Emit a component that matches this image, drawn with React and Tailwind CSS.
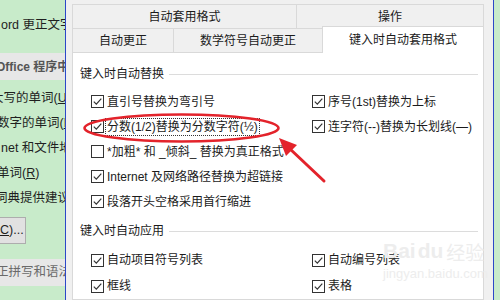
import React from 'react';

const Check = ({ checked }) => (
    <span className="w-[13px] h-[13px] border border-[#333333] bg-white flex items-center justify-center shrink-0">
        {checked && (
            <svg width="11" height="11" viewBox="0 0 11 11">
                <path d="M1.8 5.6 L4.3 8.1 L9.3 2.6" fill="none" stroke="#333333" strokeWidth="1.2" />
            </svg>
        )}
    </span>
);

const Option = ({ label, checked = true, focused = false, h = 'h-[25px]' }) => (
    <div className={`flex items-center whitespace-nowrap ${h}`}>
        <Check checked={checked} />
        {focused ? (
            <span className="ml-[1px] px-[1px] h-[18px] flex items-center border border-dotted border-[#333333]">{label}</span>
        ) : (
            <span className="ml-[3px]">{label}</span>
        )}
    </div>
);

const GroupHeader = ({ title, className }) => (
    <div className={`flex items-center h-[18px] ${className}`}>
        <span>{title}</span>
        <div className="flex-1 h-px bg-[#dcdcdc] ml-[5px]"></div>
    </div>
);

const LeftStrip = () => (
    <div className="w-[65px] shrink-0 overflow-hidden whitespace-nowrap text-[12.5px] text-[#1f1f1f] flex flex-col">
        <div className="h-[12px]"></div>
        <div className="h-[26px] flex items-center ml-[1px]">ord 更正文字和设置格式</div>
        <div className="h-[15px]"></div>
        <div className="h-[27px] flex items-center bg-[#e7e7e7] text-[#555555] text-[12px] font-semibold">
            <span className="-ml-[4px]">Office 程序中</span>
        </div>
        <div className="h-[6px]"></div>
        <div className="h-[25px] flex items-center -ml-[9px]">大写的单词(<span className="underline">U</span>)</div>
        <div className="h-[25px] flex items-center -ml-[3px]">数字的单词(<span className="underline">B</span>)</div>
        <div className="h-[25px] flex items-center ml-[1px]">net 和文件地址</div>
        <div className="h-[25px] flex items-center -ml-[3px]">单词(<span className="underline">R</span>)</div>
        <div className="h-[25px] flex items-center -ml-[5px]">词典提供建议(</div>
        <div className="h-[6px]"></div>
        <div className="h-[27px] w-[28px] -ml-[2px] flex items-center bg-[#e1e1e1] border border-[#adadad]">
            <span className="ml-[1px]"><span className="underline">C</span>)...</span>
        </div>
        <div className="h-[15px]"></div>
        <div className="h-[27px] flex items-center bg-[#e7e7e7] text-[#6a6a6a]">
            <span className="-ml-[4px]">正拼写和语法</span>
        </div>
    </div>
);

const App = () => {
    return (
        <div className="relative w-[500px] h-[300px] overflow-hidden flex bg-[#c8ebca] font-['Liberation_Sans','Noto_Sans_CJK_SC',sans-serif] text-[#1b1b1b]">
            <LeftStrip />
            <div className="w-px shrink-0 bg-[#2c48c8]"></div>

            {/* dialog */}
            <div className="w-[427px] shrink-0 bg-[#f0f0f0] pl-[6px] pr-[9px] pt-[4px] flex flex-col text-[12px]">
                <div className="flex h-[25px]">
                    <div className="w-[224px] flex items-center justify-center border-t border-l border-[#d9d9d9]">自动套用格式</div>
                    <div className="flex-1 flex items-center justify-center border-t border-l border-r border-[#d9d9d9]">操作</div>
                </div>
                <div className="flex h-[24px] items-end">
                    <div className="w-[101px] h-[24px] flex items-center justify-center border-t border-l border-[#d9d9d9]">自动更正</div>
                    <div className="w-[149px] h-[24px] flex items-center justify-center border-t border-l border-[#d9d9d9]">数学符号自动更正</div>
                    <div className="relative z-10 -mb-px flex-1 h-[27px] flex items-center justify-center bg-white border-t border-l border-r border-[#d9d9d9]">键入时自动套用格式</div>
                </div>

                {/* panel */}
                <div className="flex-1 bg-white border border-[#d9d9d9] pl-[7px] pr-[5px]">
                    <GroupHeader title="键入时自动替换" className="mt-[12px]" />
                    <div className="flex mt-[6px] ml-[11px]">
                        <div className="w-[221px]">
                            <Option label="直引号替换为弯引号" />
                            <Option label="分数(1/2)替换为分数字符(½)" focused />
                            <Option label="*加粗* 和 _倾斜_ 替换为真正格式" checked={false} />
                            <Option label="Internet 及网络路径替换为超链接" />
                            <Option label="段落开头空格采用首行缩进" />
                        </div>
                        <div className="flex-1">
                            <Option label="序号(1st)替换为上标" />
                            <Option label="连字符(--)替换为长划线(—)" />
                        </div>
                    </div>
                    <GroupHeader title="键入时自动应用" className="mt-[8px]" />
                    <div className="flex mt-[7px] ml-[11px]">
                        <div className="w-[221px]">
                            <Option label="自动项目符号列表" h="h-[26px]" />
                            <Option label="框线" h="h-[26px]" />
                        </div>
                        <div className="flex-1">
                            <Option label="自动编号列表" h="h-[26px]" />
                            <Option label="表格" h="h-[26px]" />
                        </div>
                    </div>
                </div>
            </div>

            <div className="w-px shrink-0 bg-[#2c48c8]"></div>
            <div className="flex-1"></div>

            {/* watermark */}
            <div className="absolute left-[383px] top-[240px] pointer-events-none select-none flex flex-col items-start text-[#ededed]">
                <div className="flex items-end leading-none">
                    <span className="text-[21px] font-bold">Bai</span>
                    <span className="text-[21px] font-bold ml-[2px]">du</span>
                    <span className="text-[19px] ml-[3px] font-['Noto_Sans_CJK_SC',sans-serif]">经验</span>
                </div>
                <span className="text-[13px] mt-[3px]">jingyan.baidu.com</span>
            </div>

            {/* red annotation */}
            <svg className="absolute inset-0 pointer-events-none" width="500" height="300" viewBox="0 0 500 300">
                <ellipse cx="181.5" cy="128" rx="97" ry="13.5" fill="none" stroke="#e3232b" strokeWidth="2.6" />
                <line x1="324" y1="181" x2="289" y2="148" stroke="#e3232b" strokeWidth="3" strokeLinecap="round" />
                <polygon points="279,138 297,145 286,156" fill="#e3232b" />
            </svg>
        </div>
    );
};

export default App;
